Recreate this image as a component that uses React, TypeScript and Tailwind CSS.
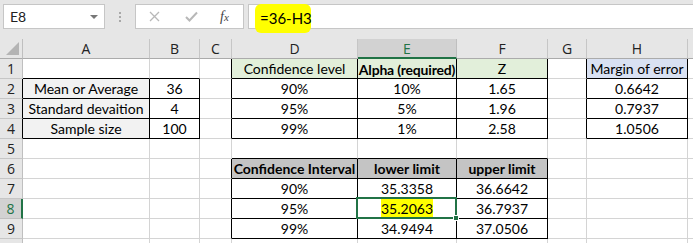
import React from 'react';

type Cell = { v: string; bold?: boolean; bg?: string; hl?: boolean };

const COLS = ['A', 'B', 'C', 'D', 'E', 'F', 'G', 'H', 'I'];
const ROWS = [1, 2, 3, 4, 5, 6, 7, 8, 9, 10];

const data: Record<string, Cell> = {
  D1: { v: 'Confidence level', bg: 'green' },
  E1: { v: 'Alpha (required)', bold: true, bg: 'green' },
  F1: { v: 'Z', bg: 'green' },
  H1: { v: 'Margin of error', bg: 'blue' },
  A2: { v: 'Mean or Average', bg: 'grey' },
  B2: { v: '36' },
  D2: { v: '90%' },
  E2: { v: '10%' },
  F2: { v: '1.65' },
  H2: { v: '0.6642' },
  A3: { v: 'Standard devaition', bg: 'grey' },
  B3: { v: '4' },
  D3: { v: '95%' },
  E3: { v: '5%' },
  F3: { v: '1.96' },
  H3: { v: '0.7937' },
  A4: { v: 'Sample size', bg: 'grey' },
  B4: { v: '100' },
  D4: { v: '99%' },
  E4: { v: '1%' },
  F4: { v: '2.58' },
  H4: { v: '1.0506' },
  D6: { v: 'Confidence Interval', bold: true, bg: 'dark' },
  E6: { v: 'lower limit', bold: true, bg: 'dark' },
  F6: { v: 'upper limit', bold: true, bg: 'dark' },
  D7: { v: '90%' },
  E7: { v: '35.3358' },
  F7: { v: '36.6642' },
  D8: { v: '95%' },
  E8: { v: '35.2063', hl: true },
  F8: { v: '36.7937' },
  D9: { v: '99%' },
  E9: { v: '34.9494' },
  F9: { v: '37.0506' },
};

// ranges with thin black borders
const boxes = [
  { r0: 2, r1: 4, c0: 0, c1: 1 },
  { r0: 1, r1: 4, c0: 3, c1: 5 },
  { r0: 1, r1: 4, c0: 7, c1: 7 },
  { r0: 6, r1: 9, c0: 3, c1: 5 },
];

const bordered = (r: number, c: number) =>
  boxes.some(b => r >= b.r0 && r <= b.r1 && c >= b.c0 && c <= b.c1);

const bgClass: Record<string, string> = {
  green: 'bg-[#e2efda]',
  blue: 'bg-[#d9e1f2]',
  grey: 'bg-[#f2f2f2]',
  dark: 'bg-[#c4c4c4]',
};

const FormulaBar = () => (
  <div className="h-[39px] bg-[#e6e6e6] relative flex items-start pt-[4px] pl-[3px]">
    <div className="w-[102px] h-[25px] bg-white border border-[#c6c6c6] flex items-center justify-between pl-[6px] pr-[6px] text-[14px] text-[#222]">
      <span>E8</span>
      <span className="w-0 h-0 border-l-[4px] border-r-[4px] border-t-[4px] border-l-transparent border-r-transparent border-t-[#777]" />
    </div>
    <div className="w-[30px] h-[25px] flex flex-col items-center justify-center gap-[2px]">
      <span className="w-[2px] h-[2px] bg-[#a8a8a8]" />
      <span className="w-[2px] h-[2px] bg-[#a8a8a8]" />
      <span className="w-[2px] h-[2px] bg-[#a8a8a8]" />
    </div>
    <div className="w-[109px] h-[25px] bg-white border border-[#c6c6c6] flex items-center">
      <svg className="ml-[13px]" width="11" height="11" viewBox="0 0 11 11">
        <path d="M1 1L10 10M10 1L1 10" stroke="#b8b8b8" strokeWidth="1.3" />
      </svg>
      <svg className="ml-[25px]" width="13" height="11" viewBox="0 0 13 11">
        <path d="M1 6L4.5 9.5L12 1.5" stroke="#b8b8b8" strokeWidth="2" fill="none" />
      </svg>
      <span className="ml-[22px] italic text-[14px] text-[#444] font-['Liberation_Serif',serif]">
        f<span className="text-[11px]">x</span>
      </span>
    </div>
    <div className="ml-[4px] flex-1 h-[25px] bg-white border border-[#c6c6c6] border-r-0 relative">
      <div className="absolute left-[6px] top-[-1px] w-[56px] h-[29px] bg-[#ffff00] rounded-[6px]" />
      <span className="absolute left-[11px] top-[2px] text-[15px] text-black">=36-H3</span>
    </div>
  </div>
);

export default function App() {
  return (
    <div className="w-[693px] h-[243px] overflow-hidden bg-white font-['Lato',sans-serif] text-black">
      <FormulaBar />
      <div className="grid grid-cols-[23px_127px_50px_32px_126px_99px_91px_39px_101px_100px] auto-rows-[20px]">
        {/* header row */}
        <div className="bg-[#e6e6e6] border-r border-b border-r-[#bfbfbf] border-b-[#ababab] relative">
          <span className="absolute right-[3px] bottom-[3px] w-0 h-0 [border-bottom:13px_solid_#b4b4b4] [border-left:13px_solid_transparent]" />
        </div>
        {COLS.map(c =>
          c === 'E' ? (
            <div key={c} className="bg-[#d2d2d2] border-r border-r-[#bfbfbf] border-b-2 border-b-[#217346] flex items-center justify-center text-[14px] text-[#217346] font-['Open_Sans',sans-serif]">
              {c}
            </div>
          ) : (
            <div key={c} className="bg-[#e6e6e6] border-r border-b border-r-[#c6c6c6] border-b-[#ababab] flex items-center justify-center text-[14px] text-[#222] font-['Open_Sans',sans-serif]">
              {c === 'I' ? '' : c}
            </div>
          )
        )}
        {ROWS.map(r => (
          <React.Fragment key={r}>
            {r === 8 ? (
              <div className="bg-[#d2d2d2] border-r-2 border-r-[#217346] border-b border-b-[#bfbfbf] flex items-center justify-center text-[14px] text-[#217346] font-['Open_Sans',sans-serif]">
                {r}
              </div>
            ) : (
              <div
                className={`bg-[#e6e6e6] border-r border-b border-b-[#c6c6c6] flex items-center justify-center text-[14px] text-[#222] font-['Open_Sans',sans-serif] ${
                  bordered(r, 0) ? 'border-r-black' : 'border-r-[#bfbfbf]'
                }`}
              >
                {r < 10 ? r : ''}
              </div>
            )}
            {COLS.map((c, ci) => {
              const cell = data[c + r];
              const rb = bordered(r, ci) || bordered(r, ci + 1);
              const bb = bordered(r, ci) || bordered(r + 1, ci);
              const clip = c === 'E' && r === 1;
              return (
                <div
                  key={c}
                  className={`relative border-r border-b flex items-center justify-center whitespace-nowrap text-[14px] ${
                    clip ? 'overflow-hidden' : ''
                  } ${rb ? 'border-r-black' : 'border-r-[#d4d4d4]'} ${bb ? 'border-b-black' : 'border-b-[#d4d4d4]'} ${
                    cell?.bg ? bgClass[cell.bg] : ''
                  } ${cell?.bold ? 'font-bold' : ''}`}
                >
                  {cell?.hl ? (
                    <>
                      <span className="bg-[#ffff00] relative z-10">{cell.v}</span>
                      <div className="absolute left-[-2px] top-[-2px] right-[-1px] bottom-[-1px] border-2 border-[#217346] z-20">
                        <span className="absolute right-[-4px] bottom-[-4px] w-[6px] h-[6px] bg-[#217346] border border-white" />
                      </div>
                    </>
                  ) : clip ? (
                    <span className="absolute left-1/2 top-1/2 -translate-x-1/2 -translate-y-1/2 tracking-[-0.2px]">{cell?.v}</span>
                  ) : (
                    cell?.v
                  )}
                </div>
              );
            })}
          </React.Fragment>
        ))}
      </div>
    </div>
  );
}
